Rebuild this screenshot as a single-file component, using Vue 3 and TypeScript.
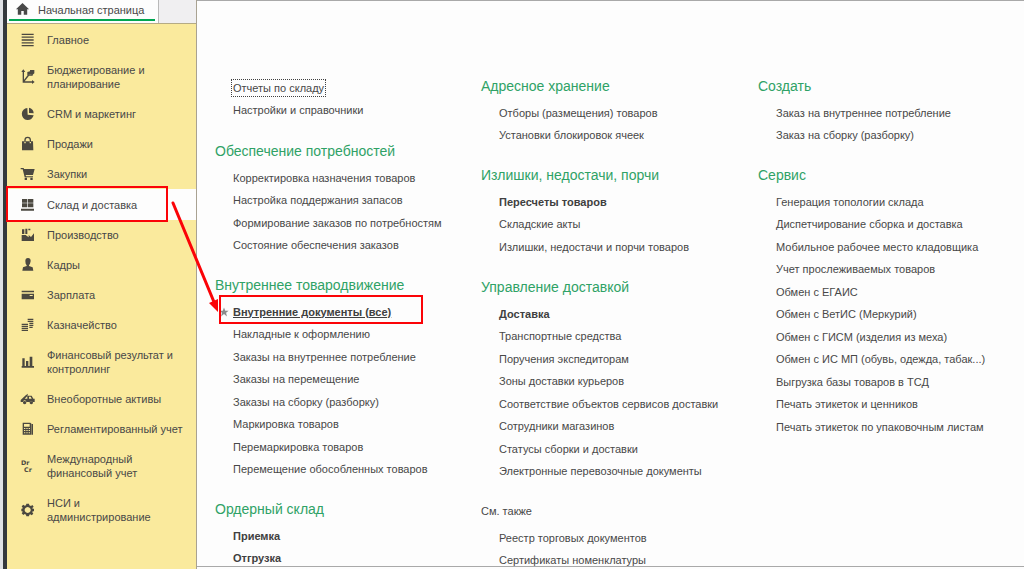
<script setup lang="ts">
interface NavItem {
  label: string
  fill?: string
  line?: string
  letters?: [string, string]
  active?: boolean
}

interface MenuLink {
  label: string
  bold?: boolean
  focused?: boolean
  starred?: boolean
}

interface MenuSection {
  title?: string
  plain?: boolean
  links: MenuLink[]
}

const nav: NavItem[] = [
  { label: 'Главное', line: 'M5 7H41M5 15.500H41M5 24H41M5 32.500H41M5 41H41' },
  {
    label: 'Бюджетирование и планирование',
    fill: 'M10 1L16 9H4ZM44 39L36 33V45ZM22 9L30 7V3H43V13L37 18L31 15L22 19Z',
    line: 'M10 5V39H38M12 36L26 18L38 18',
  },
  {
    label: 'CRM и маркетинг',
    fill: 'M22 6A18 18 0 1 0 41 28L23 26ZM27 5A18 18 0 0 1 41 22L27 21Z',
  },
  {
    label: 'Продажи',
    fill: 'M6 16H13V22H17V16H29V22H33V16H39L40 43H6Z',
    line: 'M15 18V12A8 8 0 0 1 31 12V18',
  },
  {
    label: 'Закупки',
    fill: 'M2 6H11L12 9H44L39 27H17L18 31H39V34H14L8 10H2ZM14 35H21V42H14ZM31 35H38V42H31Z',
  },
  {
    label: 'Склад и доставка',
    fill: 'M6 6H22V17H6ZM24 6H40V17H24ZM6 19H22V31H6ZM24 19H40V31H24ZM3 35H42V41H3Z',
    active: true,
  },
  {
    label: 'Производство',
    fill: 'M5 24H17L26 31V24L33 30L42 19V42H5ZM6 7H13V21H6ZM16 5H22V21H16ZM25 5H31V10H25Z',
  },
  {
    label: 'Кадры',
    fill: 'M16 12A8 9 0 0 1 32 12L30 20L27 25V27L38 31L40 41H7L9 31L20 27V25L17 20Z',
  },
  { label: 'Зарплата', fill: 'M5 11H42V16H5ZM5 20H42V37H5ZM29 24V27H38V24Z' },
  {
    label: 'Казначейство',
    line: 'M23 7H40M23 13H40M28 19H40M28 25H40M28 31H38M5 22H24M5 28H24M5 34H24M5 40H24',
  },
  {
    label: 'Финансовый результат и контроллинг',
    fill: 'M7 13H14V36H7ZM18 21H25V36H18ZM29 8H37V36H29ZM5 36H42V41H5Z',
  },
  {
    label: 'Внеоборотные активы',
    fill: 'M2 27L18 12L24 8L22 15L14 23H22V14H35L40 23H44V33H39A5 5 0 0 0 30 33H19A5 5 0 0 0 9 33H2ZM27 17V23H35L32 17ZM14 30A5 5 0 1 1 13.900 30ZM34 30A5 5 0 1 1 33.900 30Z',
  },
  {
    label: 'Регламентированный учет',
    fill: 'M8 5H31L35 9V41H8ZM12 9V17H29V9ZM12 21V24H16V21ZM19 21V24H23V21ZM26 21V24H30V21ZM12 27V30H16V27ZM19 27V30H23V27ZM26 27V30H30V27ZM12 34V37H16V34ZM19 34V37H23V34ZM26 34V37H30V34ZM36 9H39V41H36Z',
  },
  { label: 'Международный финансовый учет', letters: ['Dr', 'Cr'] },
  {
    label: 'НСИ и администрирование',
    fill: 'M19 5H27L28 10L33 12L37 9L41 14L37 18L38 20H42V28H38L37 31L40 35L35 40L31 37L28 38L27 43H19L18 38L14 36L10 39L5 34L8 30L7 28H4V20H7L8 17L5 13L10 8L14 11L18 10ZM23 15A9 9 0 1 0 23.100 15Z',
  },
]

const columns: MenuSection[][] = [
  [
    { links: [{ label: 'Отчеты по складу', focused: true }, { label: 'Настройки и справочники' }] },
    {
      title: 'Обеспечение потребностей',
      links: [
        { label: 'Корректировка назначения товаров' },
        { label: 'Настройка поддержания запасов' },
        { label: 'Формирование заказов по потребностям' },
        { label: 'Состояние обеспечения заказов' },
      ],
    },
    {
      title: 'Внутреннее товародвижение',
      links: [
        { label: 'Внутренние документы (все)', bold: true, starred: true },
        { label: 'Накладные к оформлению' },
        { label: 'Заказы на внутреннее потребление' },
        { label: 'Заказы на перемещение' },
        { label: 'Заказы на сборку (разборку)' },
        { label: 'Маркировка товаров' },
        { label: 'Перемаркировка товаров' },
        { label: 'Перемещение обособленных товаров' },
      ],
    },
    {
      title: 'Ордерный склад',
      links: [{ label: 'Приемка', bold: true }, { label: 'Отгрузка', bold: true }],
    },
  ],
  [
    {
      title: 'Адресное хранение',
      links: [{ label: 'Отборы (размещения) товаров' }, { label: 'Установки блокировок ячеек' }],
    },
    {
      title: 'Излишки, недостачи, порчи',
      links: [
        { label: 'Пересчеты товаров', bold: true },
        { label: 'Складские акты' },
        { label: 'Излишки, недостачи и порчи товаров' },
      ],
    },
    {
      title: 'Управление доставкой',
      links: [
        { label: 'Доставка', bold: true },
        { label: 'Транспортные средства' },
        { label: 'Поручения экспедиторам' },
        { label: 'Зоны доставки курьеров' },
        { label: 'Соответствие объектов сервисов доставки' },
        { label: 'Сотрудники магазинов' },
        { label: 'Статусы сборки и доставки' },
        { label: 'Электронные перевозочные документы' },
      ],
    },
    {
      title: 'См. также',
      plain: true,
      links: [{ label: 'Реестр торговых документов' }, { label: 'Сертификаты номенклатуры' }],
    },
  ],
  [
    {
      title: 'Создать',
      links: [{ label: 'Заказ на внутреннее потребление' }, { label: 'Заказ на сборку (разборку)' }],
    },
    {
      title: 'Сервис',
      links: [
        { label: 'Генерация топологии склада' },
        { label: 'Диспетчирование сборка и доставка' },
        { label: 'Мобильное рабочее место кладовщика' },
        { label: 'Учет прослеживаемых товаров' },
        { label: 'Обмен с ЕГАИС' },
        { label: 'Обмен с ВетИС (Меркурий)' },
        { label: 'Обмен с ГИСМ (изделия из меха)' },
        { label: 'Обмен с ИС МП (обувь, одежда, табак...)' },
        { label: 'Выгрузка базы товаров в ТСД' },
        { label: 'Печать этикеток и ценников' },
        { label: 'Печать этикеток по упаковочным листам' },
      ],
    },
  ],
]
</script>

<template>
  <div class="app">
    <aside class="side">
      <div class="tabs">
        <a class="tab" href="#home">
          <svg class="home" viewBox="0 0 48 48" aria-hidden="true">
            <path d="M24 3L45 23H39V41H28V29H20V41H9V23H3Z" />
          </svg>
          <span>Начальная страница</span>
        </a>
      </div>
      <nav class="nav">
        <a
          v-for="item in nav"
          :key="item.label"
          href="#section"
          class="nav-item"
          :class="{ active: item.active }"
        >
          <svg class="icon" viewBox="0 0 48 48" aria-hidden="true">
            <path v-if="item.line" class="line" :d="item.line" />
            <path v-if="item.fill" fill-rule="evenodd" :d="item.fill" />
            <template v-if="item.letters">
              <text x="3" y="21">{{ item.letters[0] }}</text>
              <text x="12" y="42">{{ item.letters[1] }}</text>
            </template>
          </svg>
          <span class="nav-label">{{ item.label }}</span>
        </a>
      </nav>
    </aside>

    <main class="panel">
      <div v-for="(column, c) in columns" :key="c" class="column">
        <section v-for="(section, s) in column" :key="s" class="section" :class="{ untitled: !section.title }">
          <h2 v-if="section.title" :class="{ plain: section.plain }">{{ section.title }}</h2>
          <ul>
            <li v-for="link in section.links" :key="link.label">
              <a
                href="#command"
                :class="{ bold: link.bold, focused: link.focused, starred: link.starred }"
              >{{ link.label }}</a>
              <template v-if="link.starred">
                <svg class="star" viewBox="0 0 24 24" aria-hidden="true">
                  <path d="M12 1L15 9H23L17 14L19 23L12 17L5 23L7 14L1 9H9Z" />
                </svg>
                <span class="frame"></span>
              </template>
            </li>
          </ul>
        </section>
      </div>
    </main>

    <svg class="arrow" viewBox="0 0 50 112" aria-hidden="true">
      <path class="shaft" d="M2 2L43 101" />
      <path d="M47 111L38 102L47 98Z" />
    </svg>
  </div>
</template>

<style>
body {
  margin: 0;
}
</style>

<style scoped>
.app {
  position: relative;
  display: flex;
  height: 100vh;
  overflow: hidden;
  background: #fdfdfd;
  color: #484848;
  font: 11px/14px "Liberation Sans", Arial, sans-serif;
}

a {
  color: inherit;
  text-decoration: none;
}

.side {
  display: flex;
  flex: none;
  flex-direction: column;
  box-sizing: border-box;
  width: 197px;
  border-left: 3px solid #dfe1e5;
  border-right: 1px solid #a9a292;
  background: #faea9d;
  box-shadow: inset 4px 0 #34383d;
  padding-left: 4px;
}

.tabs {
  display: flex;
  height: 23px;
  border-bottom: 1px solid #b5ab85;
  background: #f0eff1;
}

.tab {
  display: flex;
  align-items: center;
  gap: 8px;
  box-sizing: border-box;
  width: 152px;
  height: 23px;
  padding: 0 0 4px 8px;
  border-right: 1px solid #b9b9b9;
  background: linear-gradient(#00a651, #00a651) 2px 19px / 146px 2px no-repeat #fdfdfd;
  white-space: nowrap;
}

.home {
  flex: none;
  width: 15px;
  height: 15px;
  fill: #484848;
}

.nav {
  padding-top: 1px;
}

.nav-item {
  display: flex;
  align-items: center;
  gap: 11px;
  min-height: 30px;
  padding: 0 11px 0 13px;
}

.nav-item.active {
  position: relative;
  min-height: 31px;
  background: #fdfdfd;
}

.nav-item.active::after {
  content: "";
  position: absolute;
  inset: -3px 28px -2px -1px;
  border: 2px solid #fb0307;
}

.nav-label {
  padding: 8px 0;
}

.icon {
  flex: none;
  width: 16px;
  height: 16px;
  fill: #4b4840;
}

.icon text {
  font-family: "DejaVu Sans", sans-serif;
  font-size: 19px;
  font-weight: bold;
}

.line {
  fill: none;
  stroke: #4b4840;
  stroke-width: 4px;
}

.panel {
  display: grid;
  flex: 1;
  grid-template-columns: 266fr 277fr 266fr;
  align-items: start;
  box-sizing: border-box;
  min-width: 0;
  margin-bottom: 2px;
  padding: 70px 0 0 18px;
  border-top: 1px solid #a9a9a9;
  border-bottom: 1px solid #a9a9a9;
  overflow: hidden;
}

.section {
  margin-bottom: 14px;
}

.untitled {
  margin-bottom: 15px;
  padding-top: 5px;
}

h2 {
  margin: 0;
  color: #2fa266;
  font-size: 14px;
  font-weight: normal;
  line-height: 30px;
  white-space: nowrap;
}

h2.plain {
  color: inherit;
  font-size: 11px;
}

ul {
  margin: 0;
  padding: 0 0 0 18px;
  list-style: none;
}

li {
  position: relative;
  display: flex;
  align-items: center;
  height: 23px;
  white-space: nowrap;
}

li:nth-child(even) {
  height: 22px;
}

.bold {
  font-weight: bold;
  color: #404040;
}

.focused {
  outline: 1px dotted #404040;
  outline-offset: 1px;
}

.starred {
  text-decoration: underline;
}

.star {
  position: absolute;
  left: -14px;
  width: 10px;
  height: 10px;
  fill: #8c8c8c;
}

.frame {
  position: absolute;
  inset: -5px auto -1px -14px;
  width: 200px;
  border: 2px solid #fb0307;
}

.arrow {
  position: absolute;
  left: 171px;
  top: 201px;
  width: 50px;
  height: 112px;
  fill: #fb0307;
}

.shaft {
  fill: none;
  stroke: #fb0307;
  stroke-width: 3px;
  stroke-linecap: round;
}
</style>
